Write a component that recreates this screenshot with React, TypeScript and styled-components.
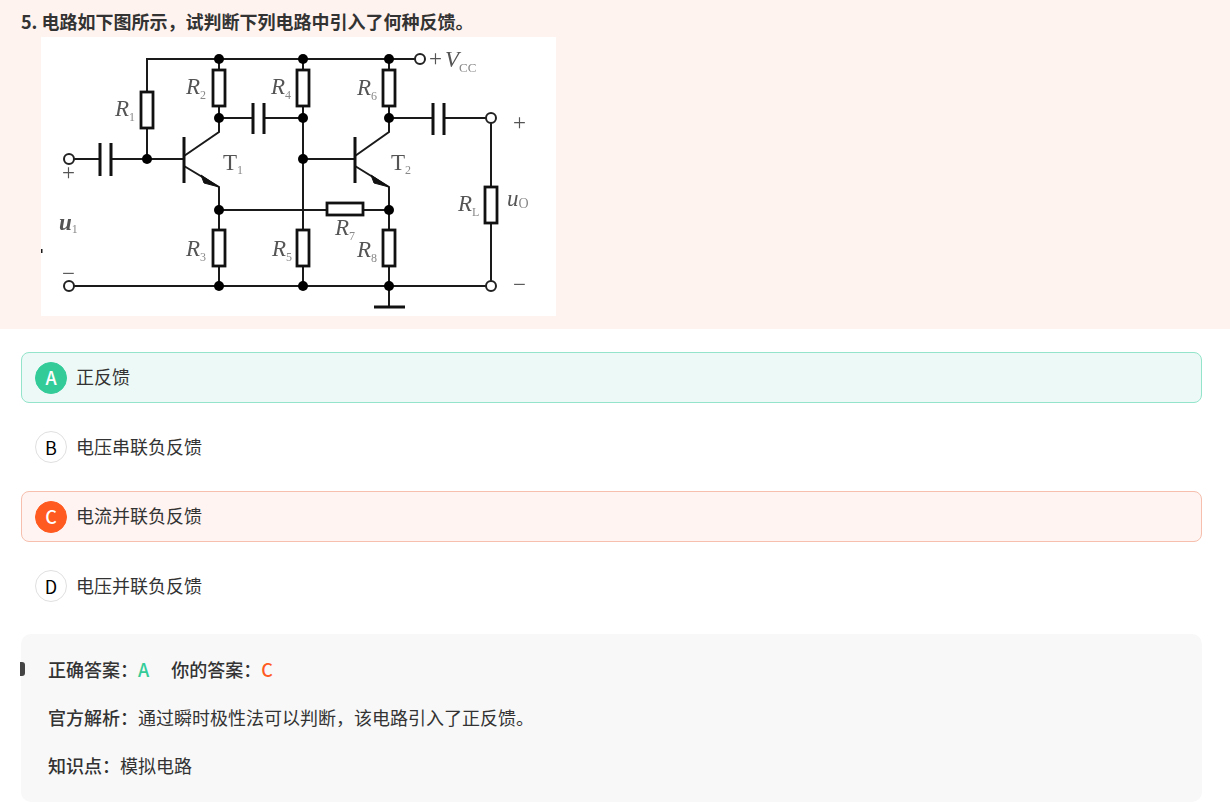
import React from "react";
import styled, { createGlobalStyle } from "styled-components";

type OptionState = "correct" | "wrong" | "plain";

const options: { key: string; label: string; state: OptionState }[] = [
  { key: "A", label: "正反馈", state: "correct" },
  { key: "B", label: "电压串联负反馈", state: "plain" },
  { key: "C", label: "电流并联负反馈", state: "wrong" },
  { key: "D", label: "电压并联负反馈", state: "plain" },
];

const GlobalStyle = createGlobalStyle`
  html, body {
    margin: 0;
    padding: 0;
    height: 100%;
    overflow: hidden;
    background: #fff;
  }
  body {
    font-family: "Noto Sans CJK SC", "Noto Sans", sans-serif;
    color: #333;
  }
`;

const Page = styled.div`
  display: flex;
  flex-direction: column;
  width: 1230px;
  height: 802px;
`;

const Stem = styled.div`
  background: #fff3ef;
  padding: 9px 21px 13px;
  height: 307px;
`;

const Title = styled.div`
  font-size: 18px;
  font-weight: 700;
  line-height: 25px;
  height: 28px;
  color: #333;
`;

const Diagram = styled.svg`
  display: block;
  width: 515px;
  height: 279px;
  margin-left: 20px;
  background: #fff;
  filter: blur(0.35px);
`;

const Options = styled.div`
  display: flex;
  flex-direction: column;
  gap: 18.5px;
  margin: 23px 28px 0 21px;
`;

const optionColors = {
  correct: { border: "#93e4ca", bg: "#ecf9f6", badge: "#33cc99", badgeBorder: "#33cc99", text: "#fff", weight: 500 },
  wrong: { border: "#f6bfae", bg: "#fff4f1", badge: "#ff5a1f", badgeBorder: "#ff5a1f", text: "#fff", weight: 500 },
  plain: { border: "transparent", bg: "transparent", badge: "#fff", badgeBorder: "#e0e0e0", text: "#000", weight: 400 },
};

const Option = styled.div<{ $state: OptionState }>`
  display: flex;
  align-items: center;
  gap: 9px;
  box-sizing: border-box;
  height: 51px;
  padding: 0 13px;
  border: 1px solid ${(p) => optionColors[p.$state].border};
  border-radius: 8px;
  background: ${(p) => optionColors[p.$state].bg};
  font-size: 18px;
  color: #333;
`;

const OptionLabel = styled.span`
  margin-top: -3px;
`;

const Badge = styled.span<{ $state: OptionState }>`
  display: flex;
  align-items: center;
  justify-content: center;
  box-sizing: border-box;
  width: 32px;
  height: 32px;
  padding-bottom: 1px;
  border-radius: 50%;
  border: 1px solid ${(p) => optionColors[p.$state].badgeBorder};
  background: ${(p) => optionColors[p.$state].badge};
  color: ${(p) => optionColors[p.$state].text};
  font-size: 18px;
  font-weight: ${(p) => optionColors[p.$state].weight};
`;

const Analysis = styled.div`
  position: relative;
  box-sizing: border-box;
  display: flex;
  flex-direction: column;
  height: 168px;
  margin: 22px 28px 0 21px;
  padding: 11px 27px;
  border-radius: 10px;
  background: #f8f8f8;
`;

const Marker = styled.span`
  position: absolute;
  left: -1px;
  top: 28px;
  width: 5px;
  height: 14px;
  border-radius: 0 3px 3px 0;
  background: #444;
`;

const Row = styled.div`
  display: flex;
  align-items: center;
  height: 48px;
  font-size: 18px;
  color: #333;
  white-space: pre;
`;

const Strong = styled.span<{ $gap?: boolean }>`
  font-weight: 500;
  margin-left: ${(p) => (p.$gap ? "22px" : "0")};
`;

const Answer = styled.span<{ $color: string }>`
  color: ${(p) => p.$color};
  font-weight: 500;
`;

const Wire = styled.path`
  fill: none;
  stroke: #1a1a1a;
  stroke-width: 2;
`;

const Plate = styled.path`
  fill: none;
  stroke: #111;
  stroke-width: 3;
`;

const Resistor = styled.rect`
  fill: #fff;
  stroke: #111;
  stroke-width: 2.8;
`;

const Dot = styled.circle`
  fill: #000;
`;

const Terminal = styled.circle`
  fill: #fff;
  stroke: #222;
  stroke-width: 2;
`;

const Sym = styled.text<{ $italic?: boolean }>`
  font-family: "Liberation Serif", serif;
  font-size: 23px;
  font-style: ${(p) => (p.$italic ? "italic" : "normal")};
  fill: #555;
`;

const Sub = styled.tspan<{ $size?: number }>`
  font-size: ${(p) => p.$size ?? 12}px;
  font-style: normal;
  font-weight: 400;
  fill: #888;
`;

const vertical: [number, number][] = [
  [219, 70], [303, 70], [389, 70], [219, 230], [303, 230], [389, 230], [491, 187], [147, 92],
];

const dots: [number, number][] = [
  [219, 59], [303, 59], [389, 59], [219, 118], [303, 118], [389, 118], [147, 159], [303, 159],
  [219, 210], [389, 210], [219, 286], [303, 286], [389, 286],
];

const labels: [string, string, number, number][] = [
  ["R", "1", 115, 116], ["R", "2", 186, 94], ["R", "4", 271, 94], ["R", "6", 357, 95],
  ["R", "3", 186, 256], ["R", "5", 272, 256], ["R", "7", 335, 235], ["R", "8", 357, 257],
  ["R", "L", 458, 211],
];

function Circuit() {
  return (
    <Diagram viewBox="41 37 515 279">
      <Wire d="M147 92V59H420M219 59V118M303 59V286M389 59V118" />
      <Wire d="M73 159H184M147 92V159M219 118H303M389 118H487M303 159H355" />
      <Wire d="M184 156L219 132V118M355 156L389 132V118" />
      <Wire d="M184 166L219 187V286M355 166L389 187V286" />
      <Wire d="M219 210H389M73 286H487M491 122V282M389 286V307" />
      <Wire d="M41.5 249V253" />
      <path d="M253 118H264M100 159H111M433 118H444" stroke="#fff" strokeWidth="4" />
      <Plate d="M100 143V176M111 143V176M253 103V134M264 103V134M433 103V135M444 103V135" />
      <path d="M184 137V183M355 137V183" stroke="#111" strokeWidth="3" fill="none" />
      <path d="M374 307H405" stroke="#111" strokeWidth="3" fill="none" />
      <path d="M201 175L219 187L204 183ZM371 175L389 187L374 183Z" fill="#111" stroke="#111" />
      {vertical.map(([x, y]) => (
        <Resistor key={`${x}-${y}`} x={x - 6} y={y} width="12" height="36" />
      ))}
      <Resistor x="327" y="203" width="36" height="12" />
      {dots.map(([x, y]) => (
        <Dot key={`${x}-${y}`} cx={x} cy={y} r="5" />
      ))}
      <Terminal cx="420" cy="59" r="5" />
      <Terminal cx="69" cy="159" r="5" />
      <Terminal cx="69" cy="286" r="5" />
      <Terminal cx="491" cy="118" r="5" />
      <Terminal cx="491" cy="286" r="5" />
      {labels.map(([r, n, x, y]) => (
        <Sym key={n} x={x} y={y} $italic>
          {r}
          <Sub dy="5">{n}</Sub>
        </Sym>
      ))}
      <Sym x="223" y="170">
        T<Sub dy="4">1</Sub>
      </Sym>
      <Sym x="391" y="170">
        T<Sub dy="4">2</Sub>
      </Sym>
      <Sym x="429" y="66">+</Sym>
      <Sym x="445" y="67" $italic>
        V
        <Sub dy="5" $size={13}>CC</Sub>
      </Sym>
      <Sym x="513" y="130">+</Sym>
      <Sym x="513" y="292">−</Sym>
      <Sym x="62" y="180">+</Sym>
      <Sym x="62" y="281">−</Sym>
      <Sym x="59" y="230" $italic fontWeight="700">
        u<Sub dy="3">1</Sub>
      </Sym>
      <Sym x="507" y="206" $italic>
        u<Sub dy="2" $size={14}>O</Sub>
      </Sym>
    </Diagram>
  );
}

export default function App() {
  return (
    <Page>
      <GlobalStyle />
      <Stem>
        <Title>5. 电路如下图所示，试判断下列电路中引入了何种反馈。</Title>
        <Circuit />
      </Stem>
      <Options>
        {options.map((o) => (
          <Option key={o.key} $state={o.state}>
            <Badge $state={o.state}>{o.key}</Badge>
            <OptionLabel>{o.label}</OptionLabel>
          </Option>
        ))}
      </Options>
      <Analysis>
        <Marker />
        <Row>
          <Strong>正确答案：</Strong>
          <Answer $color="#33cc99">A</Answer>
          <Strong $gap>你的答案：</Strong>
          <Answer $color="#ff5a1f">C</Answer>
        </Row>
        <Row>
          <Strong>官方解析：</Strong>通过瞬时极性法可以判断，该电路引入了正反馈。
        </Row>
        <Row>
          <Strong>知识点：</Strong>模拟电路
        </Row>
      </Analysis>
    </Page>
  );
}
